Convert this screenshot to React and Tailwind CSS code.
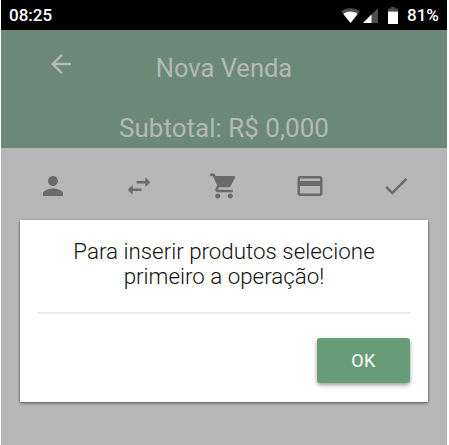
import {
  MdArrowBack,
  MdCheck,
  MdOutlineCreditCard,
  MdPerson,
  MdShoppingCart,
  MdSwapHoriz,
} from "react-icons/md";

const steps = [
  { id: "cliente", Icon: MdPerson },
  { id: "operacao", Icon: MdSwapHoriz },
  { id: "produtos", Icon: MdShoppingCart },
  { id: "pagamento", Icon: MdOutlineCreditCard },
  { id: "confirmar", Icon: MdCheck },
];

const StatusBar = () => (
  <div className="flex h-[30px] items-center bg-black pl-2 pr-[7px] text-[17px] font-medium text-white">
    <span className="w-[60px] leading-none">08:25</span>
    <div className="ml-auto flex items-center">
      {/* Wifi */}
      <svg className="h-[15px] w-[19px]" viewBox="0 0 19 15">
        <path d="M0 3.2C5.5-.9 13.5-.9 19 3.2L9.5 15z" fill="#4d4d4d" />
        <path d="M2.3 6C6.5 2.8 12.5 2.8 16.7 6L9.5 15z" fill="#fff" />
      </svg>
      {/* Signal */}
      <svg className="ml-[3px] h-[15px] w-[15px]" viewBox="0 0 15 15">
        <path d="M15 0v15H0z" fill="#4d4d4d" />
        <path d="M8.5 6.5V15H0z" fill="#fff" />
      </svg>
      {/* Battery */}
      <svg className="ml-[10px] h-[17px] w-[10px]" viewBox="0 0 10 17">
        <path d="M3 0h4v1.6h3V5H0V1.6h3z" fill="#4d4d4d" />
        <path d="M0 4.6h10V17H0z" fill="#fff" />
      </svg>
      <span className="ml-[9px] w-[33px] whitespace-nowrap leading-none">81%</span>
    </div>
  </div>
);

const Header = () => (
  <header className="h-[118px] bg-[#6c8977] text-[#b4b9b5]">
    <div className="grid h-[74px] grid-cols-[110px_1fr_110px] items-center">
      <MdArrowBack className="mb-[7px] ml-[45px] size-[30px]" />
      <h1 className="pt-[3px] text-center text-[25.5px] leading-none">Nova Venda</h1>
    </div>
    <p className="pt-1 text-center text-[26px] leading-[40px]">Subtotal: R$ 0,000</p>
  </header>
);

const Dialog = () => (
  <div className="mx-[19px] flex h-[182px] flex-col bg-white px-[18px] shadow-[0_1px_3px_rgba(0,0,0,0.6)]">
    <p className="pt-[19px] text-center text-[22.35px] font-light leading-[24.5px] text-[#111]">
      Para inserir produtos selecione
      <br />
      primeiro a operação!
    </p>
    <hr className="mt-6 border-t-2 border-[#e9e9e9]" />
    <button className="ml-auto mt-6 h-[45px] w-[93px] rounded-[3px] bg-[#689c79] text-[18px] tracking-[0.5px] text-white shadow-[0_2px_4px_rgba(0,0,0,0.4)]">
      OK
    </button>
  </div>
);

export default function App() {
  return (
    <div className="h-[445px] w-[449px] overflow-hidden bg-white pl-px pr-0.5 font-['Roboto',sans-serif]">
      <div className="h-full bg-[#b7b7b7]">
        <StatusBar />
        <Header />
        <nav className="grid h-[72px] grid-cols-5 pl-[9px] pr-[8px] pt-[23px] text-[#6b6b6b]">
          {steps.map(({ id, Icon }) => (
            <Icon key={id} className="mx-auto size-[30px]" />
          ))}
        </nav>
        <Dialog />
      </div>
    </div>
  );
}
